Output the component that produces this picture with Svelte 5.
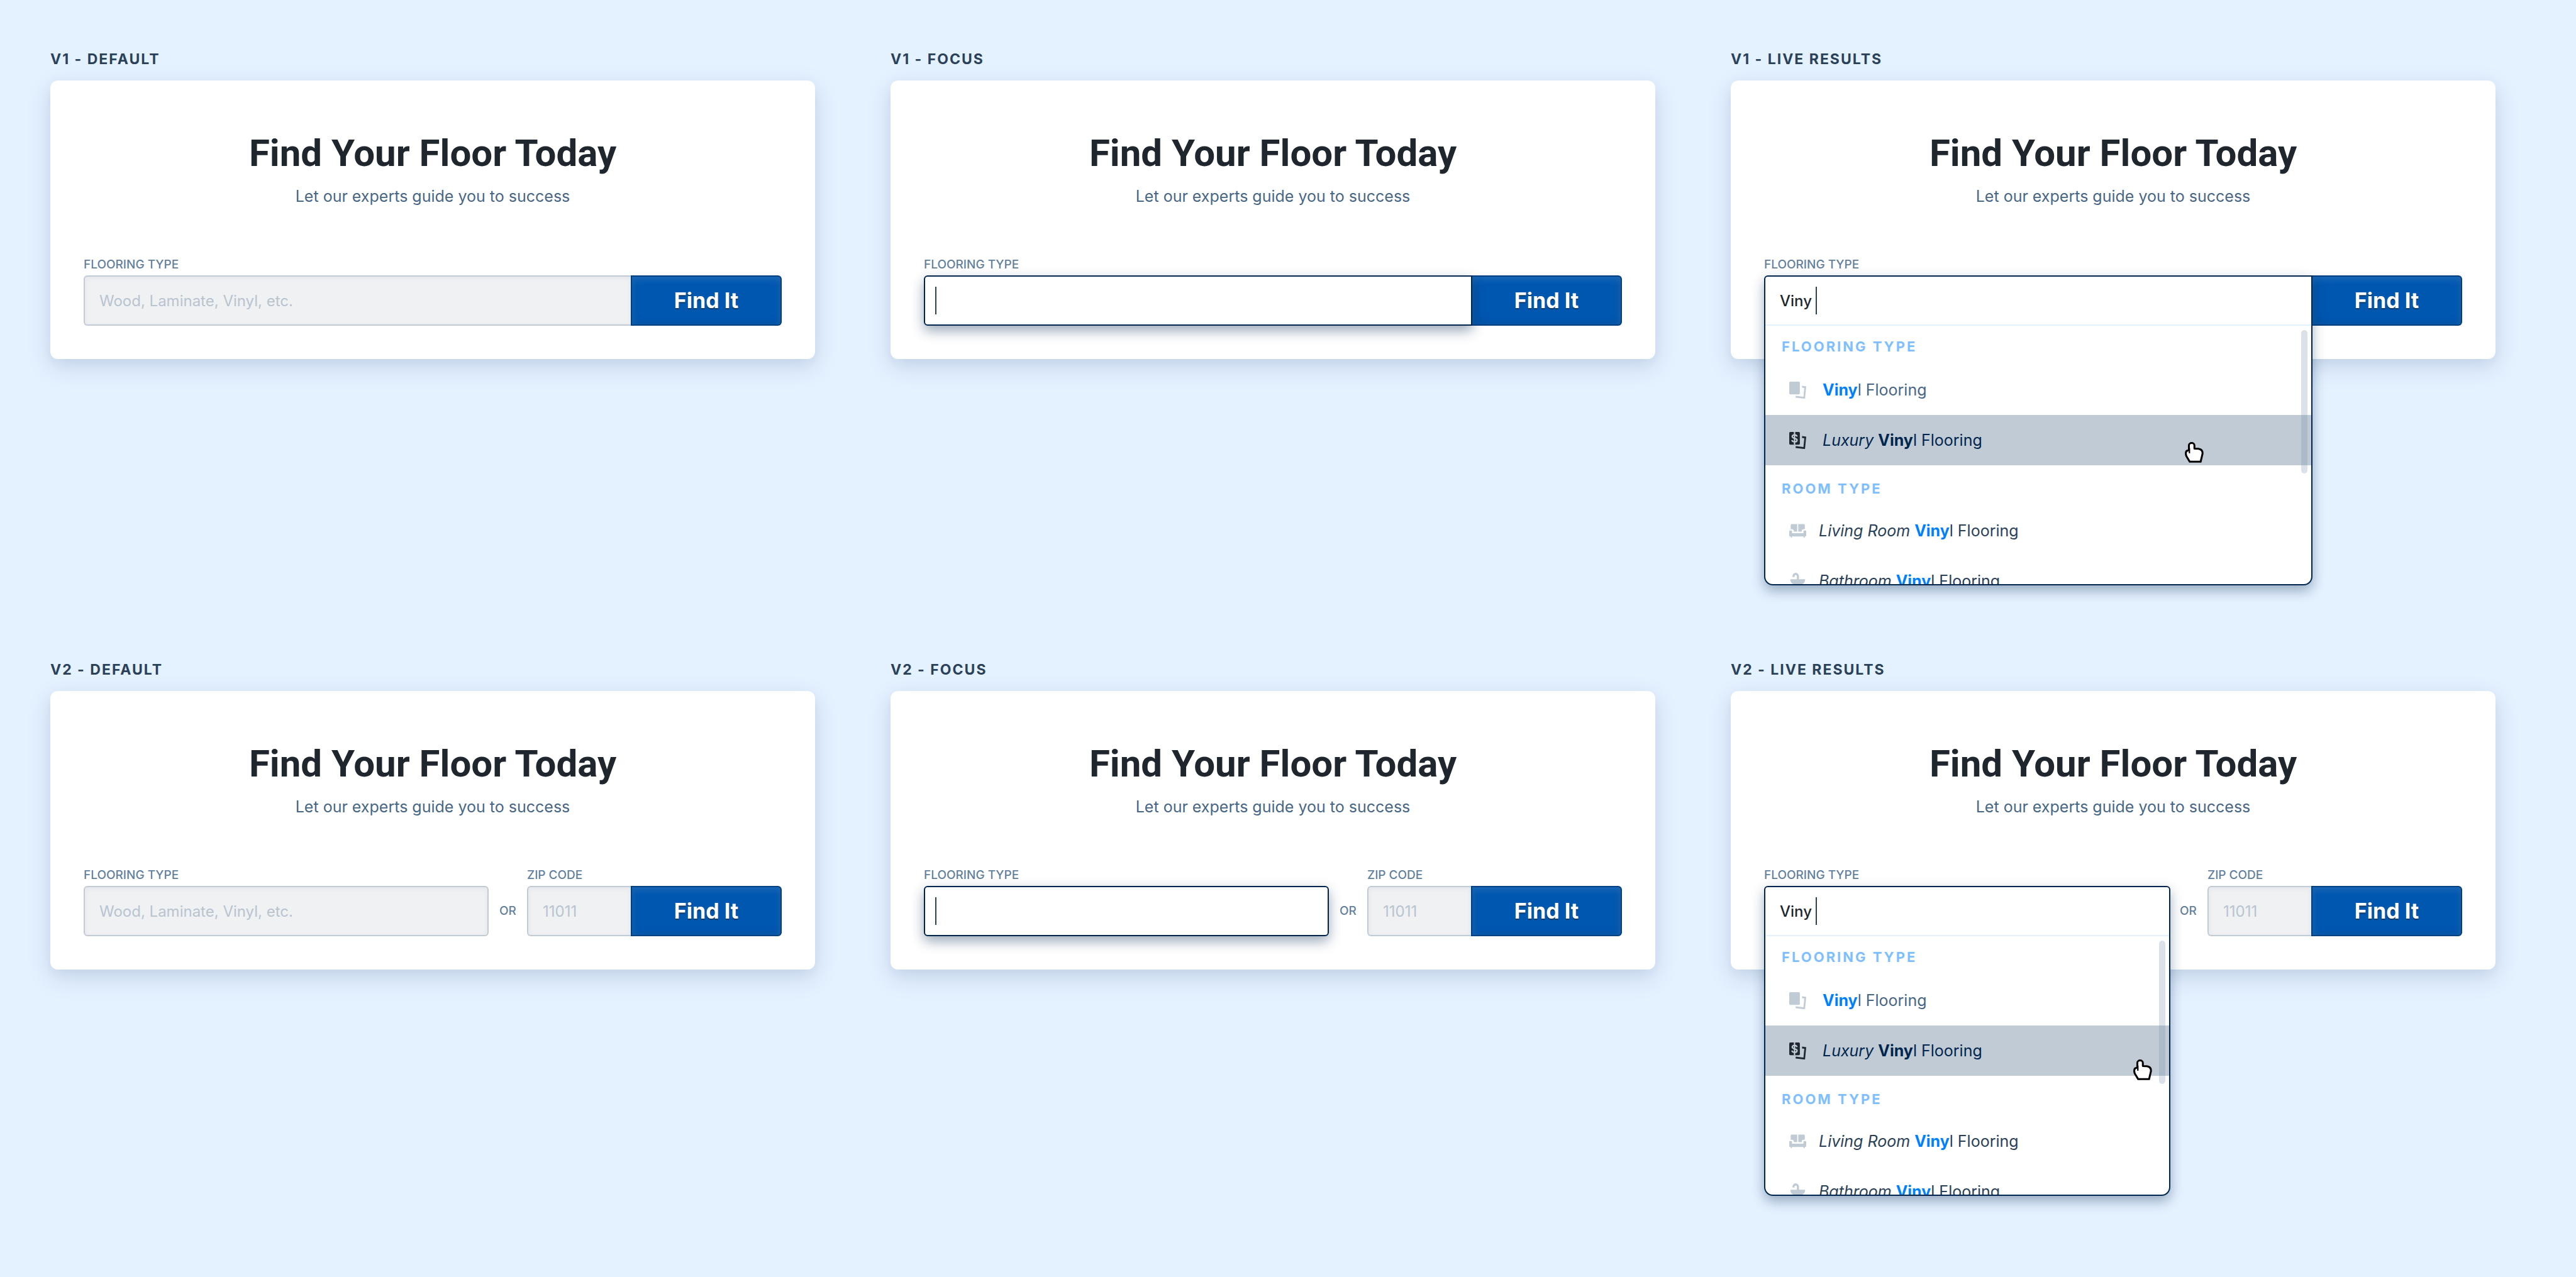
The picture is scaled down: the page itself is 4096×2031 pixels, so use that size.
<script>
  const states = [
    { id: 'default', name: 'Default' },
    { id: 'focus', name: 'Focus' },
    { id: 'live', name: 'Live Results' },
  ];
  const cards = ['v1', 'v2'].flatMap((version) =>
    states.map((state) => ({ version, state: state.id, title: `${version} - ${state.name}`, key: `${version}-${state.id}` }))
  );

  const groups = [
    {
      title: 'Flooring Type',
      kind: 'flooring',
      items: [
        { icon: 'plank', lead: '', tone: 'muted', active: false },
        { icon: 'luxury', lead: 'Luxury', tone: 'navy', active: true },
      ],
    },
    {
      title: 'Room Type',
      kind: 'room',
      items: [
        { icon: 'sofa', lead: 'Living Room', tone: 'slate', active: false },
        { icon: 'sink', lead: 'Bathroom', tone: 'slate', active: false },
      ],
    },
  ];
</script>

{#snippet glyph(name)}
  <svg class="icon" viewBox="0 0 32 32" aria-hidden="true">
    {#if name === 'plank' || name === 'luxury'}
      <rect width="20" height="24" rx="2" fill="currentColor" />
      <path d="M24.3 7.7 32 8.8 29.7 32.2 12 30.2 12.2 26.6 26.8 28.3 28.4 11.8 24 11.2z" fill="currentColor" />
      {#if name === 'luxury'}
        <path class="dollar" d="M10 0V24M14.6 8.8C14.3 6.6 12.8 5.5 10 5.5 7.2 5.5 5.6 6.7 5.6 8.7 5.6 13.2 14.7 10.8 14.7 15.3 14.7 17.4 13 18.6 10 18.6 7.1 18.6 5.4 17.4 5.1 15.2" />
      {/if}
    {:else if name === 'sofa'}
      <g fill="currentColor">
        <path d="M4.7 3H15V17.2H8.5V15Q8 12.4 2.7 12.4V5Q2.7 3 4.7 3z" />
        <path d="M17 3H27.4Q29.4 3 29.4 5V12.4Q24 12.4 23.6 15V17.2H17z" />
        <path d="M1.6 15H3.6Q5.2 15 5.2 16.6V20H26.8V16.6Q26.8 15 28.4 15H30.4Q32 15 32 16.6V24.6Q32 26.4 30 26.4H29.4L28.8 28.8H27.4L26.8 26.4H5.2L4.6 28.8H3.2L2.6 26.4H2Q0 26.4 0 24.6V16.6Q0 15 1.6 15z" />
      </g>
    {:else}
      <path d="M8 8V6.5a4.2 4.5 0 0 1 8.4 0V13" fill="none" stroke="currentColor" stroke-width="4" />
      <path d="M2 12H30C30 18 26 22 21 22H11C6 22 2 18 2 12z" fill="currentColor" />
    {/if}
  </svg>
{/snippet}

<main class="board">
  {#each cards as card (card.key)}
    <article>
      <h2 class="title">{card.title}</h2>
      <section class="card">
        <h1>Find Your Floor Today</h1>
        <p class="sub">Let our experts guide you to success</p>
        <form class="search" onsubmit={(e) => e.preventDefault()}>
          <div class="field main {card.version} {card.state}">
            <label for="type-{card.key}">Flooring Type</label>
            <div class="box">
              {#if card.state === 'live'}
                <div class="panel">
                  <div class="results">
                    {#each groups as group}
                      <h3>{group.title}</h3>
                      <ul class={group.kind}>
                        {#each group.items as item}
                          <li class={item.tone} class:active={item.active}>
                            {@render glyph(item.icon)}
                            <span>{#if item.lead}<em>{item.lead}</em>{' '}{/if}<b>Viny</b>l Flooring</span>
                          </li>
                        {/each}
                      </ul>
                    {/each}
                  </div>
                  <span class="thumb"></span>
                </div>
                <svg class="pointer" viewBox="30 27 108 120" aria-hidden="true">
                  <path d="M53 74V47C53 28 85 28 85 47V65L108 66C124 68 133 78 132 94L121 141H58L38 108C34 96 33 80 44 77Z" />
                  <path class="fold" d="M56 62V92" />
                </svg>
              {/if}
              <input
                id="type-{card.key}"
                type="text"
                autocomplete="off"
                placeholder={card.state === 'default' ? 'Wood, Laminate, Vinyl, etc.' : ''}
                value={card.state === 'live' ? 'Viny' : ''}
              />
              {#if card.state !== 'default'}<span class="caret"></span>{/if}
            </div>
          </div>
          {#if card.version === 'v2'}
            <span class="or">or</span>
            <div class="field zip">
              <label for="zip-{card.key}">Zip Code</label>
              <div class="box"><input id="zip-{card.key}" type="text" placeholder="11011" /></div>
            </div>
          {/if}
          <button type="submit">Find It</button>
        </form>
      </section>
    </article>
  {/each}
</main>

<style>
  :global(body) {
    margin: 0;
    background: #e4f1ff;
    font-family: Inter, 'Liberation Sans', sans-serif;
  }
  * {
    box-sizing: border-box;
  }
  h1, h2, h3, p, ul {
    margin: 0;
    padding: 0;
  }
  .board {
    display: grid;
    grid-template-columns: repeat(3, minmax(0, 1fr));
    align-content: start;
    column-gap: 120px;
    row-gap: 480px;
    min-height: 100vh;
    padding: 80px 128px 80px 80px;
  }
  .title {
    margin-bottom: 20px;
    font-size: 23px;
    line-height: 28px;
    font-weight: 700;
    letter-spacing: 2px;
    text-transform: uppercase;
    color: #2a4158;
  }
  .card {
    padding: 80px 53px 53px;
    border-radius: 12px;
    background: #fff;
    box-shadow: 0 12px 40px rgba(0, 43, 112, 0.12), 0 8px 20px rgba(0, 43, 82, 0.05);
  }
  h1 {
    font-family: Roboto, 'Liberation Sans', sans-serif;
    font-size: 60px;
    line-height: 72px;
    font-weight: 700;
    text-align: center;
    color: #1f262d;
  }
  .sub {
    margin-top: 14px;
    font-size: 25px;
    line-height: 36px;
    text-align: center;
    color: #486685;
  }
  .search {
    display: flex;
    align-items: flex-end;
    margin-top: 79px;
  }
  .field {
    display: flex;
    flex-direction: column;
    gap: 5px;
  }
  .main {
    flex: 1;
    min-width: 0;
  }
  .zip {
    width: 165px;
  }
  label {
    font-size: 19px;
    line-height: 24px;
    font-weight: 500;
    text-transform: uppercase;
    white-space: nowrap;
    color: #627f9c;
  }
  .box {
    position: relative;
  }
  input {
    display: block;
    width: 100%;
    height: 80px;
    padding: 0 23px;
    border: 2px solid #c0cbd6;
    border-radius: 6px;
    outline: 0;
    background: #f0f1f3;
    box-shadow: inset 0 2px 8px rgba(0, 38, 77, 0.06);
    font: 400 24px/36px Inter, 'Liberation Sans', sans-serif;
    color: #1f262d;
  }
  input::placeholder {
    color: #b8c4d0;
    opacity: 1;
  }
  .zip input,
  .v1.default input {
    border-right: 0;
    border-radius: 6px 0 0 6px;
  }
  .focus input {
    border-color: #00264d;
    background: #fff;
    box-shadow: 0 8px 20px rgba(0, 38, 77, 0.4);
  }
  .v1.focus input {
    border-radius: 6px 0 0 6px;
  }
  .live input {
    position: relative;
    border-color: transparent;
    background: transparent;
    box-shadow: none;
    font-weight: 500;
  }
  .focus .box,
  .live .box {
    z-index: 1;
  }
  .v1.focus,
  .v1.live,
  .v2.live .box {
    margin-right: -2px;
  }
  .caret {
    position: absolute;
    top: 18px;
    left: 18px;
    width: 2px;
    height: 44px;
    background: #2a4158;
  }
  .live .caret {
    left: 82px;
  }
  .or {
    width: 61px;
    font-size: 19px;
    line-height: 80px;
    font-weight: 500;
    text-align: center;
    text-transform: uppercase;
    color: #627f9c;
  }
  button {
    position: relative;
    width: 240px;
    height: 80px;
    padding: 0;
    border: 2px solid #003f80;
    border-radius: 0 6px 6px 0;
    background: #0057b0;
    box-shadow: inset 0 4px 12px rgba(255, 255, 255, 0.12), inset 0 -4px 12px rgba(0, 38, 77, 0.12);
    font: 700 34px/40px Inter, 'Liberation Sans', sans-serif;
    color: #fff;
    text-shadow: 0 2px 1px rgba(31, 38, 45, 0.6);
  }
  .panel {
    position: absolute;
    top: 0;
    left: 0;
    right: 0;
    height: 493px;
    padding-top: 76px;
    overflow: hidden;
    border: 2px solid #00264d;
    border-radius: 6px 6px 14px 14px;
    background: #fff;
    box-shadow: 0 8px 20px rgba(0, 38, 77, 0.36);
  }
  .v1 .panel {
    border-top-right-radius: 0;
  }
  .results {
    border-top: 2px solid #e4f1ff;
  }
  h3 {
    height: 62px;
    padding: 7px 26px 0;
    font-size: 22px;
    line-height: 52px;
    font-weight: 700;
    letter-spacing: 3px;
    text-transform: uppercase;
    color: #80bfff;
  }
  ul {
    list-style: none;
  }
  ul + h3 {
    height: 64px;
    padding-top: 11px;
  }
  li {
    display: flex;
    align-items: center;
    gap: 26px;
    height: 80px;
    padding-left: 38px;
    font-size: 25px;
    line-height: 36px;
    white-space: nowrap;
  }
  .room li {
    gap: 20px;
  }
  b {
    font-weight: 700;
    color: #0080ff;
  }
  .muted {
    color: #486685;
  }
  .slate {
    color: #2a4158;
  }
  .navy,
  .navy b {
    color: #00264d;
  }
  .active {
    background: #c1cbd6;
  }
  .icon {
    flex: none;
    width: 27px;
    height: 27px;
    color: #c1cbd6;
  }
  .active .icon {
    color: #1f262d;
  }
  .dollar {
    fill: none;
    stroke: #c1cbd6;
    stroke-width: 2.6;
  }
  .thumb {
    position: absolute;
    top: 85px;
    right: 6px;
    width: 10px;
    height: 228px;
    border-radius: 5px;
    background: rgba(112, 137, 169, 0.25);
  }
  .pointer {
    position: absolute;
    z-index: 2;
    top: 265px;
    right: 173px;
    width: 30px;
    height: 33px;
    overflow: visible;
    fill: #fff;
    stroke: #000;
    stroke-width: 11;
    stroke-linejoin: round;
  }
  .fold {
    fill: none;
    stroke-width: 8;
  }
  .v2 .pointer {
    top: 276px;
    right: 29px;
  }
</style>
